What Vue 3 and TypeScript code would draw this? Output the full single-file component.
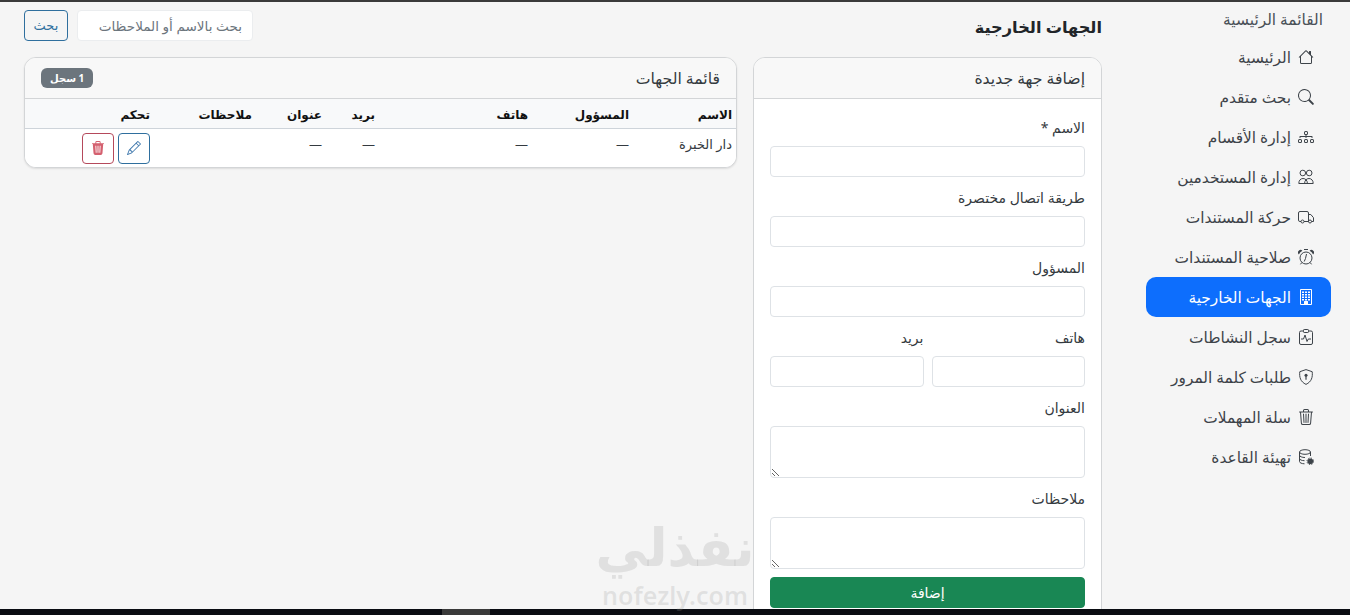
<script setup lang="ts">
import { ref } from "vue";

interface NavItem {
  label: string;
  icon: string;
  active?: boolean;
}

const nav: NavItem[] = [
  { label: "الرئيسية", icon: "home" },
  { label: "بحث متقدم", icon: "search" },
  { label: "إدارة الأقسام", icon: "diagram" },
  { label: "إدارة المستخدمين", icon: "people" },
  { label: "حركة المستندات", icon: "truck" },
  { label: "صلاحية المستندات", icon: "alarm" },
  { label: "الجهات الخارجية", icon: "building", active: true },
  { label: "سجل النشاطات", icon: "pulse" },
  { label: "طلبات كلمة المرور", icon: "shield" },
  { label: "سلة المهملات", icon: "trash" },
  { label: "تهيئة القاعدة", icon: "database" },
];

const query = ref("");
</script>

<template>
  <div class="page" dir="rtl">
    <aside class="sidebar">
      <h2 class="menu-title">القائمة الرئيسية</h2>
      <a v-for="item in nav" :key="item.label" class="nav-link" :class="{ active: item.active }" href="#">
        <svg class="nav-icon" viewBox="0 0 16 16" fill="currentColor">
          <template v-if="item.icon === 'home'">
            <path d="M8.7 1.5a1 1 0 0 0-1.4 0L.65 8.15l.7.7L2 8.2v5.3A1.5 1.5 0 0 0 3.5 15h9a1.5 1.5 0 0 0 1.5-1.5V8.2l.65.65.7-.7L13 5.8V2.5a.5.5 0 0 0-.5-.5h-1a.5.5 0 0 0-.5.5v1.3L8.7 1.500ZM13 7.200v6.300a.5.5 0 0 1-.5.5h-9a.5.5 0 0 1-.5-.5V7.200l5-5 5 5Z" />
          </template>
          <template v-else-if="item.icon === 'search'">
            <path d="M11.74 10.34a6.5 6.5 0 1 0-1.4 1.4l3.85 3.85a1 1 0 0 0 1.41-1.41l-3.86-3.84ZM12 6.5a5.5 5.5 0 1 1-11 0 5.5 5.5 0 0 1 11 0Z" />
          </template>
          <template v-else-if="item.icon === 'diagram'">
            <path fill-rule="evenodd" d="M6 3.5A1.5 1.5 0 0 1 7.5 2h1A1.5 1.5 0 0 1 10 3.5v1A1.5 1.5 0 0 1 8.5 6v1H14a.5.5 0 0 1 .5.5v1a.5.5 0 0 1-1 0V8h-5v.5a.5.5 0 0 1-1 0V8h-5v.5a.5.5 0 0 1-1 0v-1A.5.5 0 0 1 2 7h5.5V6A1.5 1.5 0 0 1 6 4.5v-1ZM8.5 5a.5.5 0 0 0 .5-.5v-1a.5.5 0 0 0-.5-.5h-1a.5.5 0 0 0-.5.5v1a.5.5 0 0 0 .5.5h1ZM0 11.500A1.500 1.500 0 0 1 1.500 10h1A1.500 1.500 0 0 1 4 11.500v1A1.500 1.500 0 0 1 2.500 14h-1A1.500 1.500 0 0 1 0 12.500v-1Zm1.500-.5a.5.5 0 0 0-.5.5v1a.5.5 0 0 0 .5.5h1a.5.5 0 0 0 .5-.5v-1a.5.5 0 0 0-.5-.5h-1Zm4.500.5A1.500 1.500 0 0 1 7.500 10h1a1.500 1.500 0 0 1 1.500 1.500v1A1.500 1.500 0 0 1 8.500 14h-1A1.500 1.500 0 0 1 6 12.500v-1Zm1.500-.5a.5.5 0 0 0-.5.5v1a.5.5 0 0 0 .5.5h1a.5.5 0 0 0 .5-.5v-1a.5.5 0 0 0-.5-.5h-1Zm4.500.5a1.500 1.500 0 0 1 1.500-1.500h1a1.500 1.500 0 0 1 1.500 1.500v1a1.500 1.500 0 0 1-1.500 1.500h-1a1.500 1.500 0 0 1-1.500-1.500v-1Zm1.500-.5a.5.5 0 0 0-.5.5v1a.5.5 0 0 0 .5.5h1a.5.5 0 0 0 .5-.5v-1a.5.5 0 0 0-.5-.5h-1Z" />
          </template>
          <template v-else-if="item.icon === 'people'">
            <g fill="none" stroke="currentColor">
              <circle cx="4.8" cy="4" r="2.8" />
              <circle cx="11.2" cy="4" r="2.8" />
              <path d="M.8 14.500c0-3 1.700-5 4.200-5 2.600 0 4.400 2 4.400 5H.8Z" />
              <path d="M6.600 14.500c0-3 1.800-5 4.400-5 2.500 0 4.200 2 4.200 5H6.600Z" />
            </g>
          </template>
          <template v-else-if="item.icon === 'truck'">
            <g fill="none" stroke="currentColor">
              <path d="M3 12.500H1.900A1.400 1.400 0 0 1 .5 11.100V4A1.500 1.500 0 0 1 2 2.500h7A1.500 1.500 0 0 1 10.500 4v8.500H6M10.500 5.500h2.300l2.700 3.200v3.800h-2" />
              <circle cx="4.500" cy="12.500" r="1.500" />
              <circle cx="12" cy="12.500" r="1.500" />
            </g>
          </template>
          <template v-else-if="item.icon === 'alarm'">
            <path d="M.86 5.390A2.500 2.500 0 1 1 4.390 1.860 8 8 0 0 0 .86 5.390ZM11.610 1.860a2.500 2.500 0 1 1 3.530 3.530 8 8 0 0 0-3.530-3.530Z" />
            <g fill="none" stroke="currentColor">
              <circle cx="8" cy="9" r="6" />
              <path d="M8.500 5 7.500 9.500 6.200 12.500M6 .5h4M3.800 13.500 2.500 15.300M12.200 13.500l1.300 1.800" />
            </g>
          </template>
          <template v-else-if="item.icon === 'building'">
            <path fill-rule="evenodd" d="M2 1a1 1 0 0 1 1-1h10a1 1 0 0 1 1 1v14a1 1 0 0 1-1 1H3a1 1 0 0 1-1-1V1Zm1 0v14h3v-2.500a.5.5 0 0 1 .5-.5h3a.5.5 0 0 1 .5.5V15h3V1H3Z" />
            <path d="M4 2.500h2v1.500H4zM7 2.500h2v1.500H7zM10 2.500h2v1.500h-2zM4 5h2v1.500H4zM7 5h2v1.500H7zM10 5h2v1.500h-2zM4 7.500h2V9H4zM7 7.500h2V9H7zM10 7.500h2V9h-2zM4 10h2v1.500H4zM7 10h2v1.500H7zM10 10h2v1.500h-2z" />
          </template>
          <template v-else-if="item.icon === 'pulse'">
            <g fill="none" stroke="currentColor">
              <path d="M5 2H3A1.500 1.500 0 0 0 1.500 3.500v10.500A1.500 1.500 0 0 0 3 15.500h10a1.500 1.500 0 0 0 1.500-1.500V3.500A1.500 1.500 0 0 0 13 2h-2" />
              <rect x="5.500" y=".5" width="5" height="3" rx=".7" />
              <path d="M3 10h2.500L7 6l2 6.500 1.300-2.500H13" />
            </g>
          </template>
          <template v-else-if="item.icon === 'shield'">
            <path fill="none" stroke="currentColor" d="M8 .6 1.800 2.700C1.200 8.200 2.400 12.700 8 15.400c5.600-2.700 6.800-7.200 6.200-12.700L8 .6Z" />
            <circle cx="8" cy="6.300" r="1.500" />
            <rect x="7.400" y="7" width="1.200" height="3.800" rx=".5" />
          </template>
          <template v-else-if="item.icon === 'trash'">
            <path d="M6.500 1h3a.5.5 0 0 1 .5.5v1H6v-1a.5.5 0 0 1 .5-.5ZM11 2.500v-1A1.500 1.500 0 0 0 9.500 0h-3A1.500 1.500 0 0 0 5 1.500v1H1.500a.5.5 0 0 0 0 1h.54l.85 10.660A2 2 0 0 0 4.890 16h6.220a2 2 0 0 0 2-1.840l.85-10.660h.54a.5.5 0 0 0 0-1H11Zm1.960 1-.85 10.580a1 1 0 0 1-1 .92H4.890a1 1 0 0 1-1-.92L3.040 3.500h9.920ZM5.470 4.500a.5.5 0 0 1 .53.470l.5 8.500a.5.5 0 0 1-1 .06L5 5.030a.5.5 0 0 1 .47-.53Zm5.060 0a.5.5 0 0 1 .47.530l-.5 8.500a.5.5 0 1 1-1-.06l.5-8.500a.5.5 0 0 1 .53-.47ZM8 4.500a.5.5 0 0 1 .5.5v8.500a.5.5 0 0 1-1 0V5a.5.5 0 0 1 .5-.5Z" />
          </template>
          <template v-else>
            <g fill="none" stroke="currentColor">
              <ellipse cx="7" cy="3" rx="5.500" ry="2.300" />
              <path d="M1.500 3v9.500c0 1.300 2.400 2.300 5 2.300M12.500 3v4M1.500 6.200c0 1.300 2.500 2.300 5.500 2.300M1.500 9.400c0 1.300 2.400 2.300 5 2.300" />
            </g>
            <circle cx="12.300" cy="12.300" r="2.800" />
            <circle cx="12.300" cy="12.300" r="3.300" fill="none" stroke="currentColor" stroke-dasharray="1.300 1.300" />
          </template>
        </svg>
        <span>{{ item.label }}</span>
      </a>
    </aside>

    <main class="main">
      <header class="topbar">
        <h1 class="page-title">الجهات الخارجية</h1>
        <form class="search" @submit.prevent>
          <input v-model="query" class="control search-input" type="text" placeholder="بحث بالاسم أو الملاحظات" />
          <button class="btn btn-outline" type="submit">بحث</button>
        </form>
      </header>

      <div class="columns">
        <section class="card form-card">
          <div class="card-header">إضافة جهة جديدة</div>
          <div class="card-body">
            <div class="field">
              <label>الاسم *</label>
              <input class="control" type="text" />
            </div>
            <div class="field">
              <label>طريقة اتصال مختصرة</label>
              <input class="control" type="text" />
            </div>
            <div class="field">
              <label>المسؤول</label>
              <input class="control" type="text" />
            </div>
            <div class="field-row">
              <div class="field">
                <label>هاتف</label>
                <input class="control" type="text" />
              </div>
              <div class="field">
                <label>بريد</label>
                <input class="control" type="email" />
              </div>
            </div>
            <div class="field">
              <label>العنوان</label>
              <textarea class="control area" rows="2"></textarea>
            </div>
            <div class="field last">
              <label>ملاحظات</label>
              <textarea class="control area" rows="2"></textarea>
            </div>
            <button class="btn btn-success" type="button">إضافة</button>
          </div>
        </section>

        <section class="card list-card">
          <div class="card-header list-header">
            <span>قائمة الجهات</span>
            <span class="badge">1 سجل</span>
          </div>
          <table class="table">
            <thead>
              <tr>
                <th class="c-name">الاسم</th>
                <th class="c-owner">المسؤول</th>
                <th class="c-phone">هاتف</th>
                <th class="c-mail">بريد</th>
                <th class="c-addr">عنوان</th>
                <th class="c-notes">ملاحظات</th>
                <th>تحكم</th>
              </tr>
            </thead>
            <tbody>
              <tr>
                <td>دار الخبرة</td>
                <td>—</td>
                <td>—</td>
                <td>—</td>
                <td>—</td>
                <td></td>
                <td>
                  <div class="actions">
                    <button class="icon-btn edit" type="button" aria-label="تعديل">
                      <svg viewBox="0 0 16 16" fill="currentColor">
                        <path d="M12.150.15a.5.5 0 0 1 .7 0l3 3a.5.5 0 0 1 0 .7l-10 10a.5.5 0 0 1-.17.11l-5 2a.5.5 0 0 1-.65-.65l2-5a.5.5 0 0 1 .11-.17l10-10ZM11.200 2.500 13.500 4.800 14.800 3.500 12.500 1.200 11.200 2.500Zm1.600 3L10.500 3.200 4 9.700V10h.5a.5.5 0 0 1 .5.5v.5h.5a.5.5 0 0 1 .5.5v.5h.3l6.500-6.500ZM3.030 10.680l-.1.100-1.530 3.820 3.820-1.530.1-.1A.5.5 0 0 1 5 12.500V12h-.5a.5.500 0 0 1-.5-.5V11h-.5a.5.5 0 0 1-.47-.32Z" />
                      </svg>
                    </button>
                    <button class="icon-btn del" type="button" aria-label="حذف">
                      <svg viewBox="0 0 16 16" fill="currentColor">
                        <path d="M11 1.500v1h3.500a.5.5 0 0 1 0 1h-.54l-.85 10.640A2 2 0 0 1 11.120 16H4.880a2 2 0 0 1-1.990-1.860L2.040 3.500H1.500a.5.5 0 0 1 0-1H5v-1A1.500 1.500 0 0 1 6.500 0h3A1.500 1.500 0 0 1 11 1.500Zm-5 0v1h4v-1a.5.5 0 0 0-.5-.5h-3a.5.5 0 0 0-.5.5Z" />
                        <path fill="#fff" d="M5 5.500h1l.4 8H5.400zM7.500 5.500h1v8h-1zM10 5.500h1l-.4 8H9.600z" />
                      </svg>
                    </button>
                  </div>
                </td>
              </tr>
            </tbody>
          </table>
        </section>
      </div>
    </main>

    <div class="bottom-bar"><span class="bar-thumb"></span></div>
    <div class="watermark" dir="rtl">
      <span class="wm-ar">نفذلي</span>
      <span class="wm-en">nofezly.com</span>
    </div>
  </div>
</template>

<style>
html,
body {
  margin: 0;
  height: 100%;
  overflow: hidden;
  background: #f5f5f5;
}
</style>

<style scoped>
.page {
  position: relative;
  height: 615px;
  box-sizing: border-box;
  overflow: hidden;
  border-top: 2px solid #3a3a3a;
  display: flex;
  gap: 44px;
  padding: 0 19px 0 24px;
  background: #f5f5f5;
  color: #212529;
  font-family: "Noto Sans", "DejaVu Sans", sans-serif;
  font-size: 14px;
  line-height: 21px;
}

.sidebar {
  width: 185px;
  flex: none;
}

.menu-title {
  margin: 0;
  padding: 7px 8px 0;
  height: 35px;
  box-sizing: border-box;
  font-size: 15.4px;
  font-weight: 400;
  color: #495057;
}

.nav-link {
  display: flex;
  align-items: center;
  gap: 7px;
  height: 40px;
  padding: 0 17px;
  border-radius: 10px;
  color: #3d4349;
  font-size: 15.4px;
  text-decoration: none;
}

.nav-link.active {
  background: #0d6efd;
  color: #fff;
}

.nav-icon {
  width: 16px;
  height: 16px;
  flex: none;
}

.main {
  flex: 1;
  min-width: 0;
}

.topbar {
  display: flex;
  justify-content: space-between;
  align-items: flex-start;
  height: 55px;
  padding-top: 8px;
  box-sizing: border-box;
}

.page-title {
  margin: 0;
  font-size: 16.2px;
  line-height: 34px;
  font-weight: 600;
}

.search {
  display: flex;
  gap: 9px;
}

.control {
  display: block;
  box-sizing: border-box;
  width: 100%;
  height: 31px;
  padding: 4px 8px;
  border: 1px solid #dee2e6;
  border-radius: 4px;
  background: #fff;
  font: inherit;
  color: #212529;
}

.control.search-input {
  width: 176px;
  padding: 4px 10px;
  border-color: #ebedef;
  font-size: 13.6px;
}

.control::placeholder {
  color: #6c757d;
}

.control.area {
  height: 52px;
  resize: vertical;
}

.btn {
  height: 31px;
  border-radius: 4px;
  font: inherit;
  cursor: pointer;
}

.btn-outline {
  width: 44px;
  border: 1px solid #2f6f9e;
  background: transparent;
  color: #2f6f9e;
  font-size: 13px;
}

.btn-success {
  display: block;
  width: 100%;
  border: 1px solid #198754;
  background: #198754;
  color: #fff;
}

.columns {
  display: flex;
  gap: 16px;
  align-items: flex-start;
}

.card {
  box-sizing: border-box;
  border: 1px solid #d3d5d7;
  border-radius: 12px;
  background: #fff;
  overflow: hidden;
}

.form-card {
  width: 349px;
  flex: none;
}

.list-card {
  flex: 1;
  min-width: 0;
  box-shadow: 0 1px 2px rgba(0, 0, 0, 0.1);
}

.card-header {
  height: 41px;
  box-sizing: border-box;
  padding: 0 16px;
  display: flex;
  align-items: center;
  background: #f8f8f8;
  border-bottom: 1px solid #d3d5d7;
  color: #343a40;
  font-size: 15.7px;
}

.list-header {
  justify-content: space-between;
}

.badge {
  padding: 2px 9px;
  border-radius: 6px;
  background: #6c757d;
  color: #fff;
  font-size: 10px;
  line-height: 16px;
  font-weight: 700;
}

.card-body {
  padding: 18px 16px 16px;
}

.field {
  margin-bottom: 10px;
}

.field.last {
  margin-bottom: 8px;
}

.field label {
  display: block;
  margin-bottom: 8px;
  color: #343a40;
  font-size: 14px;
}

.field-row {
  display: flex;
  gap: 8px;
}

.field-row .field {
  flex: 1;
  min-width: 0;
}

.table {
  width: 100%;
  border-collapse: collapse;
  background: #fff;
}

.table th {
  height: 29px;
  box-sizing: border-box;
  padding: 3px 4px 0;
  text-align: right;
  background: #f8f9fa;
  border-bottom: 1px solid #ced4da;
  font-size: 12px;
  font-weight: 700;
  color: #111;
}

.table td {
  height: 39px;
  box-sizing: border-box;
  padding: 5px 4px 3px;
  vertical-align: top;
  font-size: 13px;
  color: #343a40;
}

.c-name {
  width: 103px;
}

.c-owner {
  width: 101px;
}

.c-phone {
  width: 153px;
}

.c-mail {
  width: 53px;
}

.c-addr {
  width: 70px;
}

.c-notes {
  width: 102px;
}

.actions {
  display: flex;
  gap: 4px;
  margin-top: -1px;
}

.icon-btn {
  width: 32px;
  height: 31px;
  padding: 0;
  display: grid;
  place-items: center;
  background: transparent;
  border-radius: 4px;
  cursor: pointer;
}

.icon-btn svg {
  width: 14px;
  height: 14px;
}

.icon-btn.edit {
  border: 1px solid #2f6f9e;
  color: #3f78ad;
}

.icon-btn.del {
  border: 1px solid #b5495b;
  color: #d4606f;
}

.bottom-bar {
  position: absolute;
  left: 0;
  right: 0;
  bottom: 0;
  height: 6px;
  background: #0a0c12;
}

.bar-thumb {
  position: absolute;
  left: 442px;
  width: 48px;
  top: 0;
  bottom: 0;
  background: #3a3a3a;
}

.watermark {
  position: absolute;
  left: 590px;
  top: 513px;
  width: 170px;
  display: flex;
  flex-direction: column;
  align-items: center;
  color: rgba(150, 150, 150, 0.22);
  pointer-events: none;
}

.wm-ar {
  font-size: 52px;
  line-height: 62px;
  font-weight: 700;
}

.wm-en {
  margin-top: 5px;
  font-size: 25px;
  line-height: 26px;
  font-weight: 600;
}
</style>
